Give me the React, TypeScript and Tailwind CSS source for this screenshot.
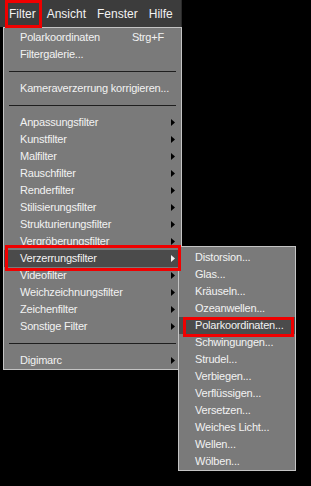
import React from 'react';

type Item =
  | { kind: 'item'; label: string; shortcut?: string; sub?: boolean; active?: boolean }
  | { kind: 'sep' };

const MAIN: Item[] = [
  { kind: 'item', label: 'Polarkoordinaten', shortcut: 'Strg+F' },
  { kind: 'item', label: 'Filtergalerie...' },
  { kind: 'sep' },
  { kind: 'item', label: 'Kameraverzerrung korrigieren...' },
  { kind: 'sep' },
  { kind: 'item', label: 'Anpassungsfilter', sub: true },
  { kind: 'item', label: 'Kunstfilter', sub: true },
  { kind: 'item', label: 'Malfilter', sub: true },
  { kind: 'item', label: 'Rauschfilter', sub: true },
  { kind: 'item', label: 'Renderfilter', sub: true },
  { kind: 'item', label: 'Stilisierungsfilter', sub: true },
  { kind: 'item', label: 'Strukturierungsfilter', sub: true },
  { kind: 'item', label: 'Vergröberungsfilter', sub: true },
  { kind: 'item', label: 'Verzerrungsfilter', sub: true, active: true },
  { kind: 'item', label: 'Videofilter', sub: true },
  { kind: 'item', label: 'Weichzeichnungsfilter', sub: true },
  { kind: 'item', label: 'Zeichenfilter', sub: true },
  { kind: 'item', label: 'Sonstige Filter', sub: true },
  { kind: 'sep' },
  { kind: 'item', label: 'Digimarc', sub: true },
];

const SUB = [
  'Distorsion...',
  'Glas...',
  'Kräuseln...',
  'Ozeanwellen...',
  'Polarkoordinaten...',
  'Schwingungen...',
  'Strudel...',
  'Verbiegen...',
  'Verflüssigen...',
  'Versetzen...',
  'Weiches Licht...',
  'Wellen...',
  'Wölben...',
];

function Arrow({ light }: { light?: boolean }) {
  return (
    <svg width="4" height="7" viewBox="0 0 4 7" className="shrink-0">
      <polygon points="0,0 4,3.5 0,7" fill={light ? '#f4f4f4' : '#000000'} />
    </svg>
  );
}

function SubMenu() {
  return (
    <div className="absolute left-[174px] -top-[4px] z-10 w-[118px] border border-[#c4c4c4] bg-[#7a7a7a] pt-[2px]">
      {SUB.map((label) => {
        const active = label === 'Polarkoordinaten...';
        return (
          <div
            key={label}
            className={
              active
                ? 'relative flex h-[17px] items-center bg-[#4b4b4b] pl-[16px]'
                : 'flex h-[17px] items-center pl-[16px]'
            }
          >
            <span className="whitespace-nowrap">{label}</span>
            {active && (
              <div className="pointer-events-none absolute left-[4px] right-[1px] top-0 -bottom-[3px] border-[3px] border-[#f00000]" />
            )}
          </div>
        );
      })}
    </div>
  );
}

export default function App() {
  return (
    <div className="relative h-[486px] w-[311px] overflow-hidden bg-black font-['Liberation_Sans',Arial,sans-serif] text-[11px] tracking-[-0.2px] text-[#f2f2f2]">
      {/* Menu bar */}
      <div className="flex h-[27px] w-[182px] items-center gap-[11px] border-r border-[#2a2a2a] bg-[#3c3c3c] pl-[9px] text-[12px] tracking-normal">
        <span className="relative">
          Filter
          <span className="absolute -left-[4px] -right-[6px] -top-[5px] -bottom-[5px] border-[3px] border-[#f00000]" />
        </span>
        <span>Ansicht</span>
        <span>Fenster</span>
        <span>Hilfe</span>
      </div>

      {/* Filter dropdown */}
      <div className="ml-[3px] w-[179px] border border-[#c4c4c4] bg-[#7a7a7a] pt-px">
        {MAIN.map((item, i) =>
          item.kind === 'sep' ? (
            <div key={i} className="flex h-[17px] items-center px-[5px]">
              <div className="h-px w-full bg-[#1e1e1e]" />
            </div>
          ) : (
            <div
              key={i}
              className={
                item.active
                  ? 'relative flex h-[17px] items-center justify-between bg-[#4b4b4b] pl-[16px] pr-[6px]'
                  : 'flex h-[17px] items-center justify-between pl-[16px] pr-[6px]'
              }
            >
              <span className="whitespace-nowrap">{item.label}</span>
              {item.shortcut && <span className="mr-[11px]">{item.shortcut}</span>}
              {item.sub && <Arrow light={item.active} />}
              {item.active && (
                <>
                  <SubMenu />
                  <div className="pointer-events-none absolute left-[1px] right-0 -top-[5px] -bottom-[4px] z-20 border-[3px] border-[#f00000]" />
                </>
              )}
            </div>
          ),
        )}
      </div>
    </div>
  );
}
